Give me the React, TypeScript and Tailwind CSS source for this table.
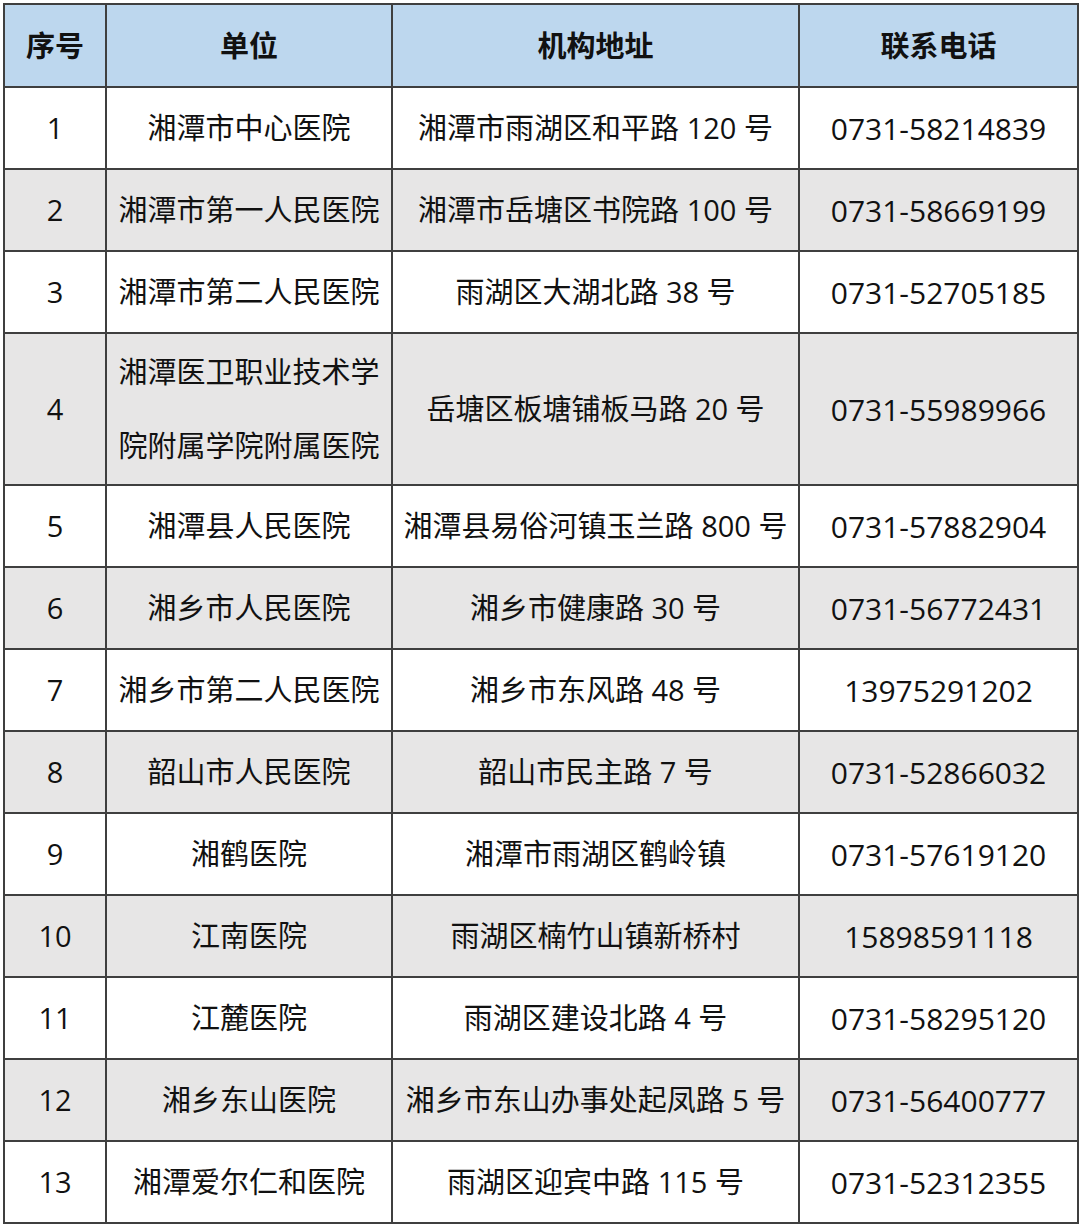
const rows: [string, string[], string, string][] = [
  ["1", ["湘潭市中心医院"], "湘潭市雨湖区和平路 120 号", "0731-58214839"],
  ["2", ["湘潭市第一人民医院"], "湘潭市岳塘区书院路 100 号", "0731-58669199"],
  ["3", ["湘潭市第二人民医院"], "雨湖区大湖北路 38 号", "0731-52705185"],
  ["4", ["湘潭医卫职业技术学", "院附属学院附属医院"], "岳塘区板塘铺板马路 20 号", "0731-55989966"],
  ["5", ["湘潭县人民医院"], "湘潭县易俗河镇玉兰路 800 号", "0731-57882904"],
  ["6", ["湘乡市人民医院"], "湘乡市健康路 30 号", "0731-56772431"],
  ["7", ["湘乡市第二人民医院"], "湘乡市东风路 48 号", "13975291202"],
  ["8", ["韶山市人民医院"], "韶山市民主路 7 号", "0731-52866032"],
  ["9", ["湘鹤医院"], "湘潭市雨湖区鹤岭镇", "0731-57619120"],
  ["10", ["江南医院"], "雨湖区楠竹山镇新桥村", "15898591118"],
  ["11", ["江麓医院"], "雨湖区建设北路 4 号", "0731-58295120"],
  ["12", ["湘乡东山医院"], "湘乡市东山办事处起凤路 5 号", "0731-56400777"],
  ["13", ["湘潭爱尔仁和医院"], "雨湖区迎宾中路 115 号", "0731-52312355"],
];

const cell = "border-2 border-[#3f3f3f] text-center align-middle p-0";

export default function App() {
  return (
    <div className="w-[1080px] h-[1227px] bg-white pt-[3px] pl-[3px]">
      <table
        className="border-collapse table-fixed w-[1074px] text-[#111] text-[29px]"
        style={{ fontFamily: '"Open Sans", "Noto Sans CJK SC", sans-serif' }}
      >
        <colgroup>
          <col className="w-[102px]" />
          <col className="w-[286px]" />
          <col className="w-[407px]" />
          <col className="w-[279px]" />
        </colgroup>
        <thead>
          <tr className="h-[83px] bg-[#bdd7ee] font-extrabold text-[29px]">
            <th className={cell}>序号</th>
            <th className={cell}>单位</th>
            <th className={cell}>机构地址</th>
            <th className={cell}>联系电话</th>
          </tr>
        </thead>
        <tbody>
          {rows.map(([no, name, addr, tel], i) => (
            <tr
              key={no}
              className={`${name.length > 1 ? "h-[152px]" : "h-[82px]"} ${i % 2 === 1 ? "bg-[#e7e6e6]" : "bg-white"}`}
            >
              <td className={cell}>{no}</td>
              <td className={`${cell} whitespace-nowrap`}>
                {name.length > 1 ? (
                  <div className="leading-[74px]">
                    {name.map((l) => (
                      <div key={l}>{l}</div>
                    ))}
                  </div>
                ) : (
                  name[0]
                )}
              </td>
              <td className={`${cell} whitespace-nowrap`}>{addr}</td>
              <td className={`${cell} text-[30px]`}>{tel}</td>
            </tr>
          ))}
        </tbody>
      </table>
    </div>
  );
}
